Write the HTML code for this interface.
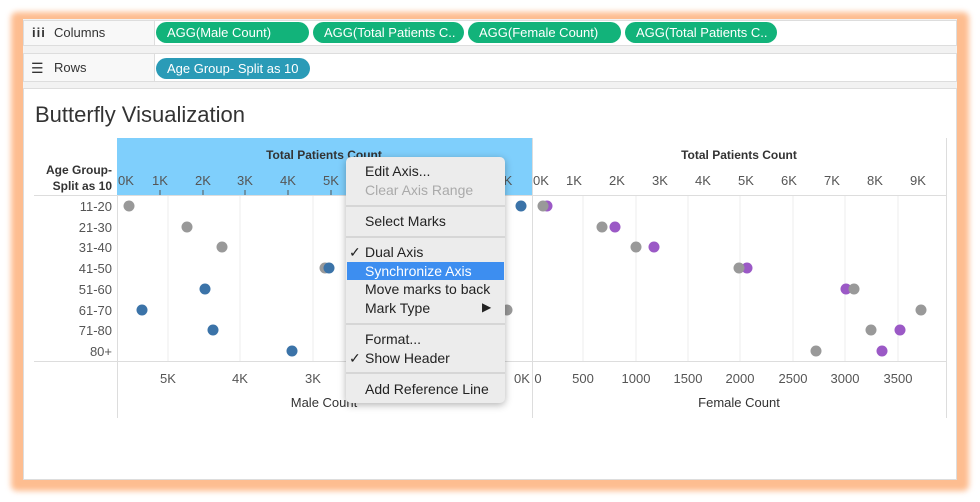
<!DOCTYPE html>
<html><head><meta charset="utf-8"><style>
*{margin:0;padding:0;box-sizing:border-box}
body{width:980px;height:502px;background:#fff;position:relative;overflow:hidden;font-family:"Liberation Sans",sans-serif;color:#333}
.frame{position:absolute;left:11px;top:12px;width:958px;height:479px;background:#fdbd90;filter:blur(3px);border-radius:6px}
.inner{position:absolute;left:23px;top:19px;width:934px;height:461px;background:#f2f2f2}
.shelf{position:absolute;left:23px;width:934px;background:#fff;border:1px solid #ddd}
.lab{position:absolute;left:0;top:0;bottom:0;width:131px;border-right:1px solid #ddd;font-size:13px;padding-left:30px;line-height:24px;background:#f8f8f8}
.pill{position:absolute;height:21px;border-radius:11px;color:#fff;font-size:13px;line-height:21px;padding-left:11px;white-space:nowrap;overflow:hidden}
.g{background:#12b37a}
.t{position:absolute;white-space:nowrap}
.menu{position:absolute;left:346px;top:157px;width:159px;height:246px;background:#ececec;border-radius:5px;box-shadow:0 2px 8px rgba(0,0,0,.3);font-size:14px;color:#222}
.mi{position:absolute;left:19px;white-space:nowrap}
.sep{position:absolute;left:0;right:0;height:2px;background:#d6d6d6}
</style></head><body>
<div class="frame"></div>
<div class="inner"></div>
<div class="shelf" style="top:20px;height:26px"><div class="lab"><span style="position:absolute;left:8px;font-weight:bold;letter-spacing:1px">iii</span>Columns</div></div>
<div class="pill g" style="left:156px;top:22px;width:153px">AGG(Male Count)</div>
<div class="pill g" style="left:313px;top:22px;width:151px">AGG(Total Patients C..</div>
<div class="pill g" style="left:468px;top:22px;width:153px">AGG(Female Count)</div>
<div class="pill g" style="left:625px;top:22px;width:152px">AGG(Total Patients C..</div>
<div class="shelf" style="top:53px;height:29px"><div class="lab" style="line-height:28px"><span style="position:absolute;left:7px;font-size:14px">☰</span>Rows</div></div>
<div class="pill" style="left:156px;top:58px;width:154px;background:#2a9bb7">Age Group- Split as 10</div>
<div style="position:absolute;left:23px;top:88px;width:934px;height:392px;background:#fff;border:1px solid #ddd"></div>
<div class="t" style="left:35px;top:102px;font-size:22px;color:#333">Butterfly Visualization</div>
<svg style="position:absolute;left:0;top:0" width="980" height="502">
<rect x="117" y="138" width="415" height="57" fill="#7fcffc"/>
<g stroke="#eee" stroke-width="1">
<line x1="168" y1="196" x2="168" y2="361"/><line x1="240" y1="196" x2="240" y2="361"/><line x1="313" y1="196" x2="313" y2="361"/>
<line x1="583" y1="196" x2="583" y2="361"/><line x1="636" y1="196" x2="636" y2="361"/><line x1="688" y1="196" x2="688" y2="361"/><line x1="740" y1="196" x2="740" y2="361"/><line x1="793" y1="196" x2="793" y2="361"/><line x1="845" y1="196" x2="845" y2="361"/><line x1="898" y1="196" x2="898" y2="361"/>
</g>
<g stroke="#ddd" stroke-width="1">
<line x1="34" y1="195.5" x2="946" y2="195.5"/><line x1="34" y1="361.5" x2="946" y2="361.5"/>
<line x1="117.5" y1="195" x2="117.5" y2="418"/><line x1="532.5" y1="138" x2="532.5" y2="418"/><line x1="946.5" y1="138" x2="946.5" y2="418"/>
</g>
<g stroke="#555" stroke-width="1"><line x1="160" y1="190" x2="160" y2="195"/><line x1="203" y1="190" x2="203" y2="195"/><line x1="245" y1="190" x2="245" y2="195"/><line x1="288" y1="190" x2="288" y2="195"/><line x1="331" y1="190" x2="331" y2="195"/></g>
<g font-family="Liberation Sans" font-size="13" fill="#555" text-anchor="middle">
<text x="126" y="185">0K</text><text x="160" y="185">1K</text><text x="203" y="185">2K</text><text x="245" y="185">3K</text><text x="288" y="185">4K</text><text x="331" y="185">5K</text><text x="508" y="185">K</text>
<text x="541" y="185">0K</text><text x="574" y="185">1K</text><text x="617" y="185">2K</text><text x="660" y="185">3K</text><text x="703" y="185">4K</text><text x="746" y="185">5K</text><text x="789" y="185">6K</text><text x="832" y="185">7K</text><text x="875" y="185">8K</text><text x="918" y="185">9K</text>
<text x="168" y="383">5K</text><text x="240" y="383">4K</text><text x="313" y="383">3K</text><text x="522" y="383">0K</text>
<text x="538" y="383">0</text><text x="583" y="383">500</text><text x="636" y="383">1000</text><text x="688" y="383">1500</text><text x="740" y="383">2000</text><text x="793" y="383">2500</text><text x="845" y="383">3000</text><text x="898" y="383">3500</text>
</g>
<g font-family="Liberation Sans" font-size="13" fill="#555" text-anchor="end">
<text x="112" y="211">11-20</text><text x="112" y="232">21-30</text><text x="112" y="252">31-40</text><text x="112" y="273">41-50</text><text x="112" y="294">51-60</text><text x="112" y="315">61-70</text><text x="112" y="335">71-80</text><text x="112" y="356">80+</text>
</g>
<g font-family="Liberation Sans" font-size="12" fill="#333" font-weight="bold">
<text x="112" y="174" text-anchor="end">Age Group-</text><text x="112" y="190" text-anchor="end">Split as 10</text>
<text x="324" y="159" text-anchor="middle">Total Patients Count</text><text x="739" y="159" text-anchor="middle">Total Patients Count</text>
<text x="324" y="407" text-anchor="middle" font-weight="normal" font-size="13">Male Count</text><text x="739" y="407" text-anchor="middle" font-weight="normal" font-size="13">Female Count</text>
</g>
<g fill="#999"><circle cx="129" cy="206" r="5.5"/><circle cx="187" cy="227" r="5.5"/><circle cx="222" cy="247" r="5.5"/><circle cx="325" cy="268" r="5.5"/><circle cx="507" cy="310" r="5.5"/></g>
<g fill="#3b73a8"><circle cx="521" cy="206" r="5.5"/><circle cx="329" cy="268" r="5.5"/><circle cx="205" cy="289" r="5.5"/><circle cx="142" cy="310" r="5.5"/><circle cx="213" cy="330" r="5.5"/><circle cx="292" cy="351" r="5.5"/></g>
<g fill="#9b59c6"><circle cx="547" cy="206" r="5.5"/><circle cx="615" cy="227" r="5.5"/><circle cx="654" cy="247" r="5.5"/><circle cx="747" cy="268" r="5.5"/><circle cx="846" cy="289" r="5.5"/><circle cx="900" cy="330" r="5.5"/><circle cx="882" cy="351" r="5.5"/></g>
<g fill="#999"><circle cx="543" cy="206" r="5.5"/><circle cx="602" cy="227" r="5.5"/><circle cx="636" cy="247" r="5.5"/><circle cx="739" cy="268" r="5.5"/><circle cx="854" cy="289" r="5.5"/><circle cx="921" cy="310" r="5.5"/><circle cx="871" cy="330" r="5.5"/><circle cx="816" cy="351" r="5.5"/></g>
</svg>
<div class="menu">
<div class="mi" style="top:6px">Edit Axis...</div>
<div class="mi" style="top:25px;color:#aaa">Clear Axis Range</div>
<div class="sep" style="top:48px"></div>
<div class="mi" style="top:56px">Select Marks</div>
<div class="sep" style="top:79px"></div>
<div class="mi" style="top:87px"><span style="position:absolute;left:-16px">✓</span>Dual Axis</div>
<div style="position:absolute;left:1px;right:1px;top:105px;height:18px;background:#3d8ef0"></div>
<div class="mi" style="top:106px;color:#fff">Synchronize Axis</div>
<div class="mi" style="top:124px">Move marks to back</div>
<div class="mi" style="top:143px">Mark Type</div>
<div class="mi" style="top:143px;left:136px;font-size:12px">▶</div>
<div class="sep" style="top:166px"></div>
<div class="mi" style="top:174px">Format...</div>
<div class="mi" style="top:193px"><span style="position:absolute;left:-16px">✓</span>Show Header</div>
<div class="sep" style="top:215px"></div>
<div class="mi" style="top:224px">Add Reference Line</div>
</div>
</body></html>
